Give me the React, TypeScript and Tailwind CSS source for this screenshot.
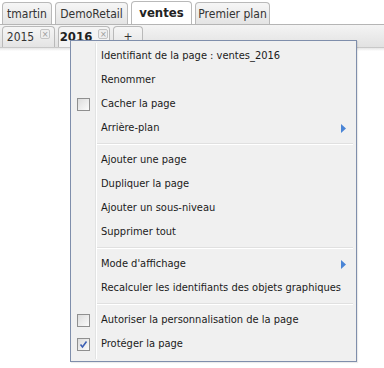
import React from "react"

type Item =
  | { kind: "item"; label: string; check?: boolean; checked?: boolean; sub?: boolean }
  | { kind: "sep" }

const items: Item[] = [
  { kind: "item", label: "Identifiant de la page : ventes_2016" },
  { kind: "item", label: "Renommer" },
  { kind: "item", label: "Cacher la page", check: true },
  { kind: "item", label: "Arrière-plan", sub: true },
  { kind: "sep" },
  { kind: "item", label: "Ajouter une page" },
  { kind: "item", label: "Dupliquer la page" },
  { kind: "item", label: "Ajouter un sous-niveau" },
  { kind: "item", label: "Supprimer tout" },
  { kind: "sep" },
  { kind: "item", label: "Mode d'affichage", sub: true },
  { kind: "item", label: "Recalculer les identifiants des objets graphiques" },
  { kind: "sep" },
  { kind: "item", label: "Autoriser la personnalisation de la page", check: true },
  { kind: "item", label: "Protéger la page", check: true, checked: true },
]

function CloseBox() {
  return (
    <span className="ml-[6px] mt-[-6px] flex h-[10px] w-[10px] shrink-0 items-center justify-center rounded-[2px] border border-[#c4c4c4] bg-[#eeeeee] text-[9px] font-normal leading-none text-[#9a9a9a]">
      ×
    </span>
  )
}

function Tab({ label, active, w, close }: { label: string; active?: boolean; w: string; close?: boolean }) {
  return (
    <div
      className={`flex shrink-0 items-center justify-center whitespace-nowrap rounded-t-[4px] border border-b-0 border-[#b9b9b9] ${w} ${
        active ? "bg-white font-bold text-[#222]" : "bg-gradient-to-b from-[#f6f6f6] to-[#e4e4e4] text-[#333]"
      }`}
    >
      <span>{label}</span>
      {close && <CloseBox />}
    </div>
  )
}

function CheckBox({ checked }: { checked?: boolean }) {
  return (
    <span className="flex h-[13px] w-[13px] items-center justify-center border border-[#8f8f8f] bg-gradient-to-br from-[#dcdcdc] to-[#fbfbfb]">
      {checked && (
        <svg width="9" height="9" viewBox="0 0 9 9">
          <path d="M1.5 4.5 L3.5 7 L7.5 1.5" fill="none" stroke="#3c5fb4" strokeWidth="1.6" />
        </svg>
      )}
    </span>
  )
}

export default function App() {
  return (
    <div
      className="relative h-[368px] w-[384px] bg-white text-[11px]"
      style={{ fontFamily: "Tahoma, 'DejaVu Sans Condensed', 'Liberation Sans', Arial, sans-serif" }}
    >
      <div className="flex h-[25px] items-end gap-[3px] border-b border-[#b5b5b5] bg-white pl-[2px] text-[12px]">
        <Tab label="tmartin" w="h-[22px] w-[50px]" />
        <Tab label="DemoRetail" w="h-[22px] w-[73px]" />
        <Tab label="ventes" w="h-[23px] w-[61px] text-[13px]" active />
        <Tab label="Premier plan" w="h-[22px] w-[75px]" />
      </div>
      <div className="flex h-[23px] items-end gap-[3px] border-b border-[#c8c8c8] bg-gradient-to-b from-[#f4f4f4] to-[#e2e2e2] pl-[2px] text-[12px]">
        <Tab label="2015" w="h-[21px] w-[53px]" close />
        <Tab label="2016" w="h-[21px] w-[52px] !bg-[#f4f4f4] text-[13px]" active close />
        <Tab label="+" w="h-[21px] w-[30px]" />
      </div>
      <div className="h-[3px] bg-gradient-to-b from-[#e6e6e6] to-white" />

      <div className="absolute left-[70px] top-[40px] w-[287px] border border-[#7f8eab] bg-[#f0f0f0] pb-[5px] pt-[3px] shadow-[1px_1px_1px_rgba(0,0,0,0.08)]">
        <div className="absolute bottom-[2px] left-[24px] top-[2px] w-[2px] border-l border-r border-l-[#e2e3e3] border-r-white" />
        {items.map((it, i) =>
          it.kind === "sep" ? (
            <div key={i} className="flex h-[8px] items-center pl-[26px] pr-[3px]">
              <div className="h-[2px] w-full border-b border-t border-b-white border-t-[#e0e0e0]" />
            </div>
          ) : (
            <div key={i} className="relative flex h-[24px] items-center text-[#1b1b1b]">
              <div className="flex w-[30px] shrink-0 items-center justify-start pl-[6px]">
                {it.check && <CheckBox checked={it.checked} />}
              </div>
              <span className="whitespace-nowrap">{it.label}</span>
              {it.sub && (
                <svg className="absolute right-[10px]" width="5" height="9" viewBox="0 0 5 9">
                  <path d="M0 0 L5 4.5 L0 9 Z" fill="#4a85d6" />
                </svg>
              )}
            </div>
          ),
        )}
      </div>
    </div>
  )
}
